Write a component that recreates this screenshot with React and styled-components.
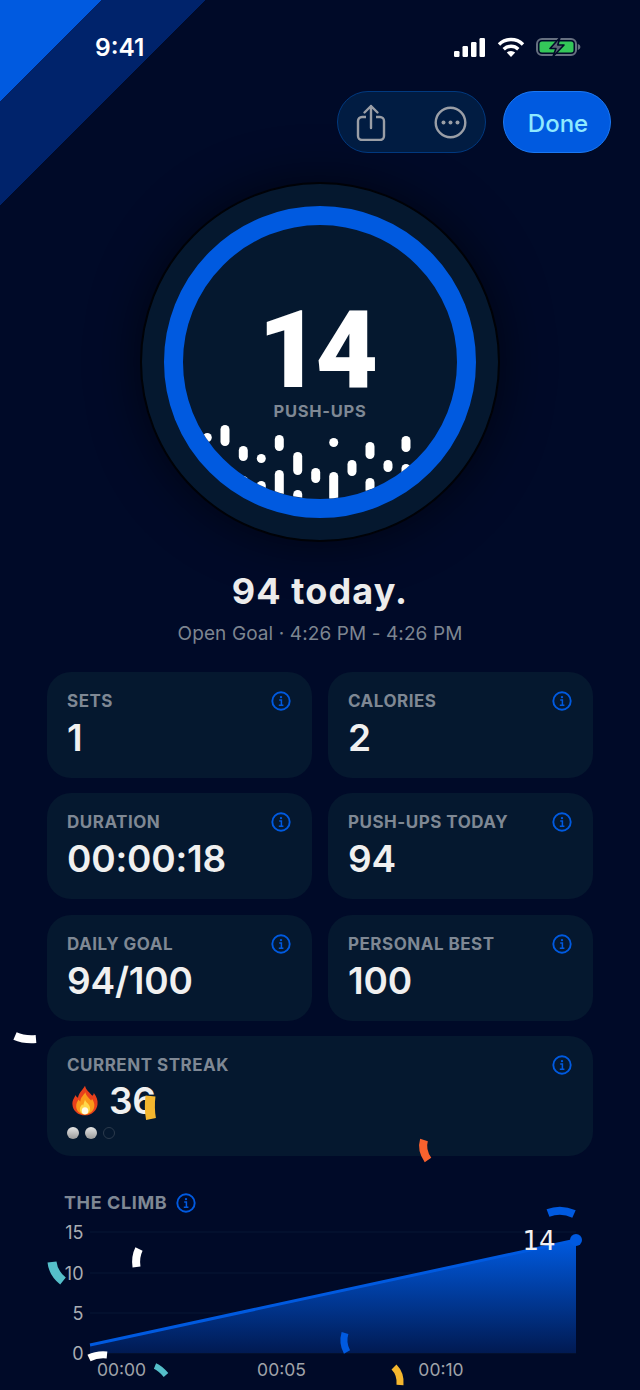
import React from "react";
import styled, { createGlobalStyle } from "styled-components";

const BLUE = "#005ae0";
const LABEL = "#7f8894";

const GlobalStyle = createGlobalStyle`
  * {
    box-sizing: border-box;
    margin: 0;
    padding: 0;
  }

  body {
    background: #000a28;
    font-family: "Inter", "Liberation Sans", sans-serif;
  }
`;

const Screen = styled.div`
  position: relative;
  width: 640px;
  height: 1390px;
  overflow: hidden;
  background: linear-gradient(
    135deg,
    ${BLUE} 0 72px,
    #00236b 72px 145px,
    #000a28 145px
  );
`;

const StatusBar = styled.div`
  display: flex;
  align-items: center;
  justify-content: space-between;
  height: 91px;
  padding: 3px 59px 0 95px;
`;

const Clock = styled.span`
  color: #fff;
  font-size: 24.5px;
  font-weight: 600;
`;

const StatusIcons = styled.div`
  display: flex;
  align-items: center;
  gap: 11.5px;
`;

const Actions = styled.div`
  display: flex;
  justify-content: flex-end;
  gap: 17px;
  padding-right: 29px;
`;

const IconPill = styled.div`
  display: flex;
  align-items: center;
  justify-content: space-between;
  width: 149px;
  height: 62px;
  padding: 0 18px;
  border: 1px solid #01397f;
  border-radius: 31px;
  background: #011c42;
`;

const DoneButton = styled.button`
  width: 108px;
  height: 62px;
  padding: 2px 0 0 2px;
  border: 1px solid #1b78f2;
  border-radius: 31px;
  background: ${BLUE};
  color: #8fe9ff;
  font-family: inherit;
  font-size: 24px;
  font-weight: 500;
`;

const Dial = styled.div`
  display: flex;
  align-items: center;
  justify-content: center;
  width: 360px;
  height: 360px;
  margin: 29px auto 0;
  border: 2px solid #000207;
  border-radius: 50%;
  background: #05182f;
  box-shadow: 0 0 50px rgba(0, 0, 0, 0.55);
`;

const Ring = styled.div`
  position: relative;
  display: flex;
  flex-direction: column;
  align-items: center;
  width: 312px;
  height: 312px;
  padding-top: 80px;
  overflow: hidden;
  border: 19px solid ${BLUE};
  border-radius: 50%;
`;

const Count = styled.div`
  margin-right: 9px;
  color: #fff;
  font-family: "Roboto", "Inter", sans-serif;
  font-size: 108px;
  font-weight: 900;
  line-height: 90px;
  letter-spacing: -5px;
`;

const CountLabel = styled.div`
  margin-top: 6px;
  color: ${LABEL};
  font-size: 16.5px;
  font-weight: 700;
  line-height: 20px;
  letter-spacing: 0.7px;
`;

const Dots = styled.svg`
  position: absolute;
  inset: 0;
`;

const Headline = styled.h1`
  margin-top: 27px;
  color: #ececec;
  font-size: 36px;
  font-weight: 700;
  line-height: 44px;
  text-align: center;
  letter-spacing: 1.1px;
`;

const Subline = styled.p`
  margin-top: 9px;
  color: #7d8590;
  font-size: 19px;
  line-height: 24px;
  text-align: center;
  letter-spacing: 0.1px;
`;

const Grid = styled.div`
  display: grid;
  grid-template-columns: 1fr 1fr;
  gap: 15.33px 16px;
  margin-top: 26px;
  padding: 0 47px;
`;

const Card = styled.div`
  grid-column: ${(p) => (p.$wide ? "1 / -1" : "auto")};
  height: ${(p) => (p.$wide ? "120px" : "106px")};
  padding: 18px 21px 0 20px;
  border-radius: 24px;
  background: #05182f;
`;

const CardHead = styled.div`
  display: flex;
  align-items: center;
  justify-content: space-between;
  height: 22px;
`;

const Label = styled.span`
  color: ${LABEL};
  font-size: 17px;
  font-weight: 700;
  letter-spacing: 0.5px;
`;

const Value = styled.div`
  margin-top: 6px;
  color: #f0f0f0;
  font-size: 37px;
  font-weight: 600;
  line-height: 40px;
  letter-spacing: -0.2px;
`;

const StreakValue = styled(Value)`
  margin-top: 0;
`;

const StreakRow = styled.div`
  display: flex;
  align-items: center;
  gap: 11px;
  margin: 5px 0 0 5px;
`;

const Pips = styled.div`
  display: flex;
  gap: 6px;
  margin-top: 6px;
`;

const Pip = styled.span`
  width: 12px;
  height: 12px;
  border-radius: 50%;
  background: ${(p) =>
    p.$on ? "linear-gradient(180deg, #e6e6e6, #9a9a9a)" : "transparent"};
  border: ${(p) => (p.$on ? "none" : "1.5px solid #2b3a4c")};
`;

const ChartHead = styled.div`
  display: flex;
  align-items: center;
  gap: 9px;
  height: 22px;
  margin-top: 36px;
  padding-left: 64px;
`;

const ChartTitle = styled.span`
  color: ${LABEL};
  font-size: 18px;
  font-weight: 700;
  letter-spacing: 0.6px;
`;

const Chart = styled.svg`
  display: block;
  margin-top: 6px;
`;

const Confetti = styled.svg`
  position: absolute;
  inset: 0;
  pointer-events: none;
`;

const InfoIcon = () => (
  <svg width="20" height="20" viewBox="0 0 20 20" fill="none">
    <circle cx="10" cy="10" r="8.7" stroke={BLUE} strokeWidth="1.9" />
    <circle cx="10" cy="6.1" r="1.2" fill={BLUE} />
    <path d="M8.2 9h2.2v5M7.8 14.2h4.6" stroke={BLUE} strokeWidth="1.5" />
  </svg>
);

const SignalIcon = () => (
  <svg width="31" height="19" viewBox="0 0 31 19" fill="#fff">
    <rect x="0" y="13" width="5.5" height="6" rx="1.2" />
    <rect x="8.5" y="8" width="5.5" height="11" rx="1.2" />
    <rect x="17" y="4" width="5.5" height="15" rx="1.2" />
    <rect x="25.5" y="0" width="5.5" height="19" rx="1.2" />
  </svg>
);

const WifiIcon = () => (
  <svg width="28" height="20" viewBox="0 0 28 20" fill="none">
    <path d="M2 7.5A17 17 0 0 1 26 7.5" stroke="#fff" strokeWidth="3.4" />
    <path d="M6.7 12.2A10.5 10.5 0 0 1 21.3 12.2" stroke="#fff" strokeWidth="3.4" />
    <path d="M9.8 15.6A6 6 0 0 1 18.2 15.6L14 20Z" fill="#fff" />
  </svg>
);

const BatteryIcon = () => (
  <svg width="45" height="20" viewBox="0 0 45 20" fill="none">
    <rect x="1" y="2" width="39" height="16" rx="5" stroke="#667080" strokeWidth="2" />
    <rect x="3.5" y="4.5" width="34" height="11" rx="2.5" fill="#34c759" />
    <path d="M41.8 7v6c1.6-.4 2.6-1.6 2.6-3s-1-2.6-2.6-3Z" fill="#667080" />
    <path
      d="M24 0.5 14 11.5h6l-3 8 11-11.5h-6.2Z"
      fill="#5d6675"
      stroke="#000a28"
      strokeWidth="1.6"
      strokeLinejoin="round"
    />
  </svg>
);

const ShareIcon = () => (
  <svg width="30" height="37" viewBox="0 0 30 37" fill="none" stroke="#9a9ea6" strokeWidth="2.4">
    <path d="M10 13H6a4 4 0 0 0-4 4v15a4 4 0 0 0 4 4h18a4 4 0 0 0 4-4V17a4 4 0 0 0-4-4h-4" />
    <path d="M15 24V2M8.5 8.5 15 2l6.5 6.5" strokeLinecap="round" strokeLinejoin="round" />
  </svg>
);

const MoreIcon = () => (
  <svg width="33" height="33" viewBox="0 0 33 33" fill="none">
    <circle cx="16.5" cy="16.5" r="14.8" stroke="#9a9ea6" strokeWidth="2.4" />
    <circle cx="9.5" cy="16.5" r="2" fill="#9a9ea6" />
    <circle cx="16.5" cy="16.5" r="2" fill="#9a9ea6" />
    <circle cx="23.5" cy="16.5" r="2" fill="#9a9ea6" />
  </svg>
);

const FlameIcon = () => (
  <svg width="26" height="31" viewBox="0 0 28 32">
    <path
      d="M14 0c1 5 5 7 8 11 1-1 1.5-2 1.5-3 3 4 4.5 8 4 12-.6 6.5-6 12-13.5 12S1 27 .5 20.5C0 16 2.5 13 4 10c.5 1.5 1 2.5 2.5 3C7 8 11 5 14 0Z"
      fill="#e8401c"
    />
    <path
      d="M14.5 7c.5 4 4 6 6 9 .5-.5 1-1 1-2 2 3 3 5.5 2.5 8.5-.6 5-4.8 8.5-10 8.5s-9-3.5-9.5-8C4.2 19 6 17 7 15c.5 1 1 1.5 2 2 0-4 3-6.5 5.5-10Z"
      fill="#fb9a1a"
    />
    <path
      d="M14 15c.5 3 5 5 5.5 9 .3 3.5-2.5 7-5.5 7s-6-3-5.5-6.5c.3-2 1.5-3 2.5-4.5.5.5.8 1 1 1.5.5-2.5 1.5-4 2-6.5Z"
      fill="#ffd84a"
    />
    <ellipse cx="14" cy="27" rx="3.5" ry="3.8" fill="#fffbe6" />
  </svg>
);

// [x, top, height] in page coordinates, the ring clips what runs past it
const DOT_LIST = [
  [207.3, 433, 9], [225, 425, 21], [243.3, 446, 15], [261.3, 454, 9],
  [279.3, 435, 16], [297.7, 452, 23], [315.7, 468, 15], [333.7, 438, 9],
  [352, 460, 16], [370, 442, 17], [388, 460, 12], [406, 436, 16],
  [243.3, 476, 16], [261.3, 481, 16], [279.3, 470, 30], [297.7, 490, 20],
  [333.7, 472, 30], [370, 478, 16], [406, 464, 16],
];

const CONFETTI = [
  { d: "M15 1036Q24 1040 36 1039", c: "#fff", w: 8 },
  { d: "M150.5 1096Q149 1108 151 1119", c: "#f4b62e", w: 10 },
  { d: "M139 1249Q135 1257 136.5 1267", c: "#fff", w: 8 },
  { d: "M52 1262Q53 1273 63 1281", c: "#55bfca", w: 9 },
  { d: "M89 1358Q97 1354 107 1355", c: "#fff", w: 7 },
  { d: "M155 1366Q160 1368 166 1375", c: "#55bfca", w: 6 },
  { d: "M424 1140Q421 1150 428 1160", c: "#f8622e", w: 8 },
  { d: "M548 1213Q561 1208 574 1214", c: BLUE, w: 8 },
  { d: "M345 1333Q342 1343 347 1352", c: BLUE, w: 7 },
  { d: "M394 1367Q401 1374 400 1385", c: "#f4b62e", w: 7 },
];

const STATS = [
  { label: "SETS", value: "1" },
  { label: "CALORIES", value: "2" },
  { label: "DURATION", value: "00:00:18" },
  { label: "PUSH-UPS TODAY", value: "94" },
  { label: "DAILY GOAL", value: "94/100" },
  { label: "PERSONAL BEST", value: "100" },
];

const GRID_Y = [
  { y: 1232, label: "15" },
  { y: 1273, label: "10" },
  { y: 1313, label: "5" },
  { y: 1353, label: "0" },
];

const TICKS = [
  { x: 121.5, label: "00:00" },
  { x: 281.5, label: "00:05" },
  { x: 441, label: "00:10" },
];

const App = () => {
  return (
    <Screen>
      <GlobalStyle />
      <StatusBar>
        <Clock>9:41</Clock>
        <StatusIcons>
          <SignalIcon />
          <WifiIcon />
          <BatteryIcon />
        </StatusIcons>
      </StatusBar>

      <Actions>
        <IconPill>
          <ShareIcon />
          <MoreIcon />
        </IconPill>
        <DoneButton>Done</DoneButton>
      </Actions>

      <Dial>
        <Ring>
          <Dots width="274" height="274" viewBox="183 225 274 274">
            {DOT_LIST.map(([x, top, h]) => (
              <rect
                key={`${x}-${top}`}
                x={x - 4.5}
                y={top}
                width="9"
                height={h}
                rx="4.5"
                fill="#fff"
              />
            ))}
          </Dots>
          <Count>14</Count>
          <CountLabel>PUSH-UPS</CountLabel>
        </Ring>
      </Dial>

      <Headline>94 today.</Headline>
      <Subline>Open Goal · 4:26 PM - 4:26 PM</Subline>

      <Grid>
        {STATS.map((stat) => (
          <Card key={stat.label}>
            <CardHead>
              <Label>{stat.label}</Label>
              <InfoIcon />
            </CardHead>
            <Value>{stat.value}</Value>
          </Card>
        ))}
        <Card $wide>
          <CardHead>
            <Label>CURRENT STREAK</Label>
            <InfoIcon />
          </CardHead>
          <StreakRow>
            <FlameIcon />
            <StreakValue>36</StreakValue>
          </StreakRow>
          <Pips>
            <Pip $on />
            <Pip $on />
            <Pip />
          </Pips>
        </Card>
      </Grid>

      <ChartHead>
        <ChartTitle>THE CLIMB</ChartTitle>
        <InfoIcon />
      </ChartHead>

      <Chart width="640" height="170" viewBox="0 1220 640 170">
        <defs>
          <linearGradient id="climbFill" x1="0" y1="0" x2="0" y2="1">
            <stop offset="0" stopColor={BLUE} />
            <stop offset="1" stopColor="#011a52" />
          </linearGradient>
        </defs>
        {GRID_Y.map((row) => (
          <g key={row.label}>
            <line x1="90" x2="576" y1={row.y} y2={row.y} stroke="#071634" />
            <text
              x="83.5"
              y={row.y + 6.5}
              textAnchor="end"
              fill="#a9adb3"
              fontSize="18"
              fontFamily="Inter, sans-serif"
            >
              {row.label}
            </text>
          </g>
        ))}
        <path d="M90 1345L576 1240V1353H90Z" fill="url(#climbFill)" />
        <path d="M90 1345L576 1240" stroke={BLUE} strokeWidth="3" fill="none" />
        <circle cx="576" cy="1240" r="6" fill={BLUE} />
        {TICKS.map((tick) => (
          <text
            key={tick.label}
            x={tick.x}
            y="1376"
            textAnchor="middle"
            fill="#a0a4aa"
            fontSize="17.5"
            fontFamily="Inter, sans-serif"
          >
            {tick.label}
          </text>
        ))}
        <text
          x="539"
          y="1250"
          textAnchor="middle"
          fill="#f2f2f2"
          fontSize="26"
          fontFamily="'DejaVu Sans', sans-serif"
        >
          14
        </text>
      </Chart>

      <Confetti width="640" height="1390" viewBox="0 0 640 1390">
        {CONFETTI.map((piece) => (
          <path key={piece.d} d={piece.d} stroke={piece.c} strokeWidth={piece.w} fill="none" />
        ))}
      </Confetti>
    </Screen>
  );
};

export default App;
